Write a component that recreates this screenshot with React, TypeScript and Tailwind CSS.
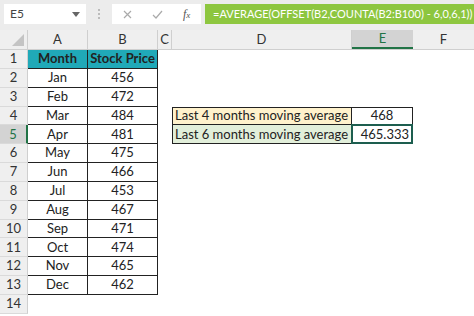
import React from "react";

const rows: [string, string][] = [
  ["Jan", "456"],
  ["Feb", "472"],
  ["Mar", "484"],
  ["Apr", "481"],
  ["May", "475"],
  ["Jun", "466"],
  ["Jul", "453"],
  ["Aug", "467"],
  ["Sep", "471"],
  ["Oct", "474"],
  ["Nov", "465"],
  ["Dec", "462"],
];

const RowHead = ({ n, active }: { n: number; active?: boolean }) => (
  <div
    className={
      "w-[28px] shrink-0 flex items-center justify-center border-b border-[#dadada] text-[13px] " +
      (active
        ? "bg-[#d3d3d3] text-[#217346] border-r-2 border-r-[#217346]"
        : "bg-[#efefef] text-[#333] border-r border-r-[#cfcfcf]")
    }
  >
    {n}
  </div>
);

export default function App() {
  return (
    <div
      className="w-[474px] h-[316px] overflow-hidden bg-white text-[#222] whitespace-nowrap"
      style={{ fontFamily: "Lato, 'Open Sans', sans-serif" }}
    >
      {/* formula bar */}
      <div className="h-[30px] bg-[#ececec] flex items-start pt-[4px] pl-[4px]">
        <div className="w-[82px] h-[20px] bg-white flex items-center justify-between pl-[6px] pr-[6px] text-[12px] text-[#444]">
          <span>E5</span>
          <svg width="8" height="5" viewBox="0 0 8 5">
            <path d="M0 0 L8 0 L4 5 Z" fill="#666" />
          </svg>
        </div>
        <div className="w-[26px] h-[20px] flex flex-col items-center justify-center gap-[2px]">
          <span className="w-[2px] h-[2px] bg-[#bbb]" />
          <span className="w-[2px] h-[2px] bg-[#bbb]" />
          <span className="w-[2px] h-[2px] bg-[#bbb]" />
        </div>
        <div className="w-[89px] h-[20px] bg-white flex items-center">
          <svg className="ml-[11px]" width="9" height="9" viewBox="0 0 9 9">
            <path d="M1 1 L8 8 M8 1 L1 8" stroke="#aaa" strokeWidth="1.2" />
          </svg>
          <svg className="ml-[20px]" width="11" height="9" viewBox="0 0 11 9">
            <path d="M1 5 L4 8 L10 1" stroke="#aaa" strokeWidth="1.2" fill="none" />
          </svg>
          <span
            className="ml-[20px] text-[12px] italic text-[#555]"
            style={{ fontFamily: "'Liberation Serif', serif" }}
          >
            f<span className="text-[9px]">x</span>
          </span>
        </div>
        <div className="ml-[4px] flex-1 h-[20px] bg-[#8dc63f] text-white text-[11px] flex items-center pl-[8px]">
          =AVERAGE(OFFSET(B2,COUNTA(B2:B100) - 6,0,6,1))
        </div>
      </div>

      {/* column headers */}
      <div className="h-[20px] flex bg-[#efefef] border-b border-[#cfcfcf] text-[13px] text-[#333]">
        <div className="w-[28px] shrink-0 flex items-end justify-end pr-[3px] pb-[3px] border-r border-[#cfcfcf]">
          <svg width="12" height="12" viewBox="0 0 12 12">
            <path d="M12 0 L12 12 L0 12 Z" fill="#c4c4c4" />
          </svg>
        </div>
        <div className="w-[60px] shrink-0 flex items-center justify-center border-r border-[#cfcfcf]">A</div>
        <div className="w-[70px] shrink-0 flex items-center justify-center border-r border-[#cfcfcf]">B</div>
        <div className="w-[14px] shrink-0 flex items-center justify-center border-r border-[#cfcfcf]">C</div>
        <div className="w-[180px] shrink-0 flex items-center justify-center border-r border-[#cfcfcf]">D</div>
        <div className="w-[61px] shrink-0 flex items-center justify-center bg-[#d3d3d3] text-[#217346] border-b-2 border-b-[#217346]">E</div>
        <div className="flex-1 flex items-center justify-center">F</div>
      </div>

      {/* row 1 */}
      <div className="h-[18.85px] flex text-[13px]">
        <RowHead n={1} />
        <div className="w-[60px] shrink-0 bg-[#20a9b8] font-bold flex items-center justify-center border-r border-b border-[#222]">
          Month
        </div>
        <div className="w-[70px] shrink-0 bg-[#20a9b8] font-bold flex items-center justify-center border-r border-b border-[#222]">
          Stock Price
        </div>
      </div>

      {rows.map(([m, p], i) => {
        const n = i + 2;
        return (
          <div key={m} className="h-[18.85px] flex text-[13px]">
            <RowHead n={n} active={n === 5} />
            <div className="w-[60px] shrink-0 flex items-center justify-center border-r border-b border-[#222]">
              {m}
            </div>
            <div className="w-[70px] shrink-0 flex items-center justify-center border-r border-b border-[#222]">
              {p}
            </div>
            <div className="w-[14px] shrink-0" />
            {n === 4 && (
              <>
                <div className="w-[180px] shrink-0 bg-[#fff2cc] flex items-center pl-[2px] border border-[#222]">
                  Last 4 months moving average
                </div>
                <div className="w-[61px] shrink-0 flex items-center justify-center border-t border-r border-b border-[#222]">
                  468
                </div>
              </>
            )}
            {n === 5 && (
              <>
                <div className="w-[180px] shrink-0 bg-[#e2efda] flex items-center pl-[2px] border-l border-r border-b border-[#222]">
                  Last 6 months moving average
                </div>
                <div className="relative w-[61px] shrink-0 flex items-center justify-end pr-[3px] border-r border-b border-[#222]">
                  465.333
                  <div className="absolute inset-[-1px] border-2 border-[#1d5e4f]" />
                </div>
              </>
            )}
          </div>
        );
      })}

      <div className="h-[18.85px] flex text-[13px]">
        <RowHead n={14} />
      </div>
    </div>
  );
}
